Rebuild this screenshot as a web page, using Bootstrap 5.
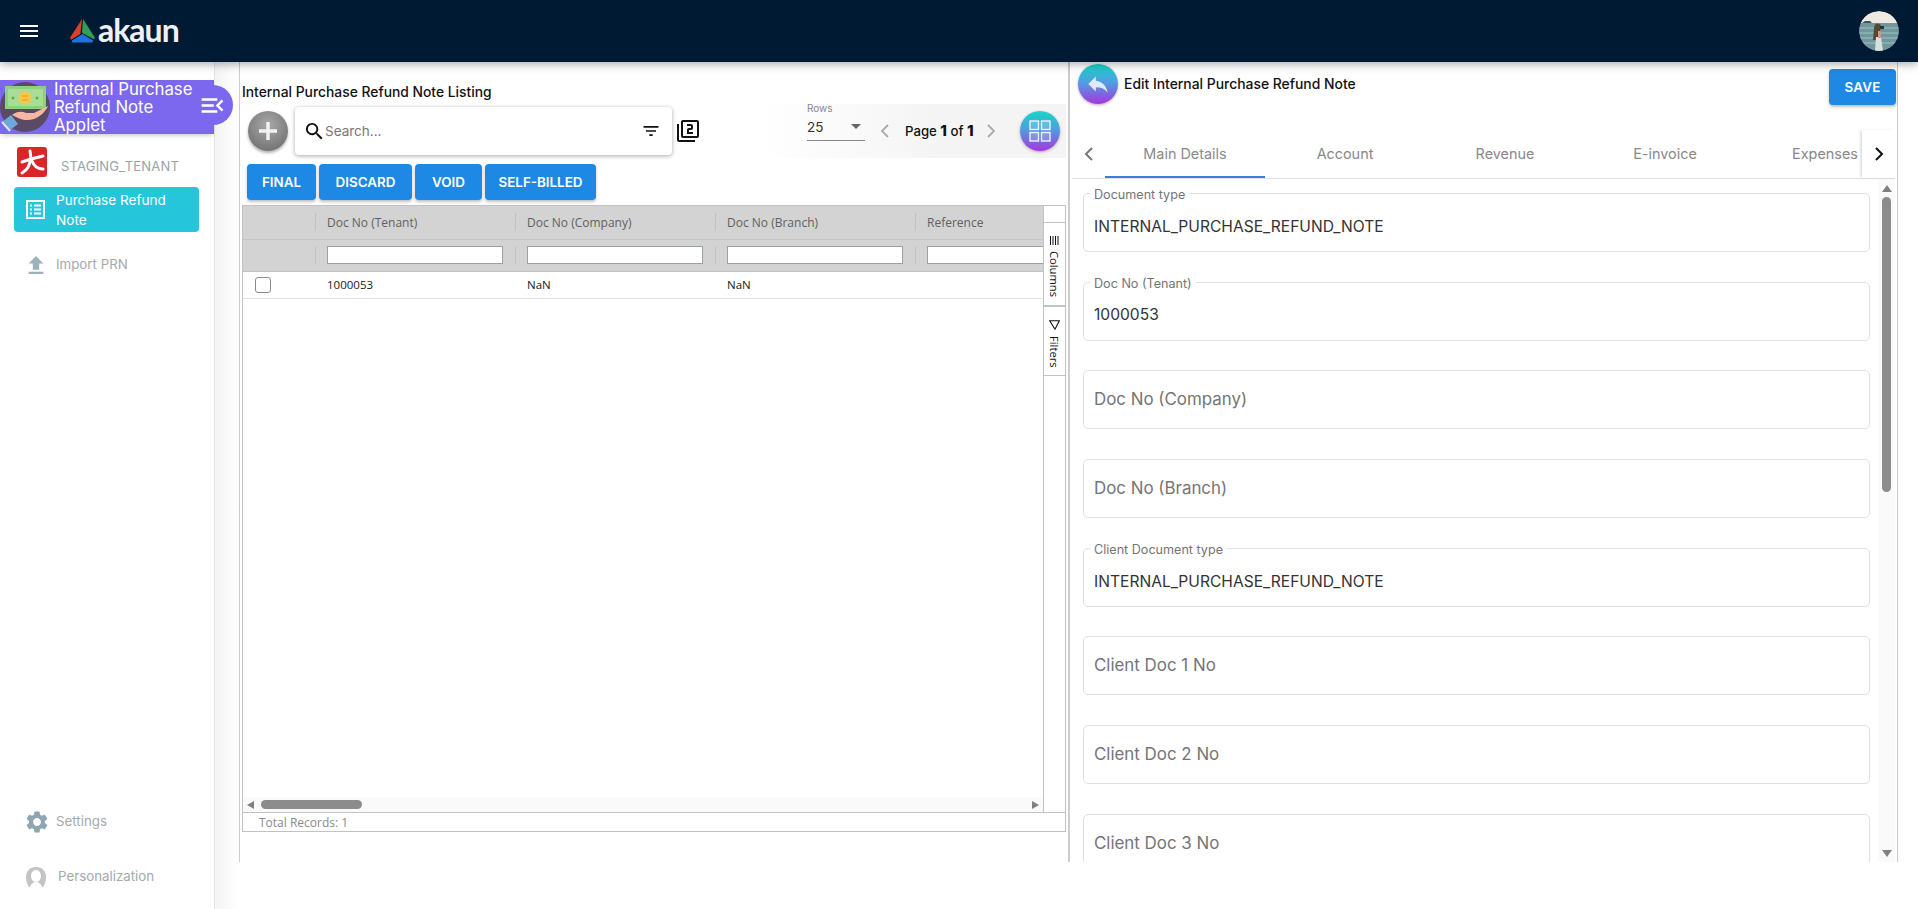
<!DOCTYPE html>
<html lang="en">
<head>
<meta charset="UTF-8">
<title>Internal Purchase Refund Note Applet</title>
<link href="https://cdn.jsdelivr.net/npm/bootstrap@5.3.0/dist/css/bootstrap.min.css" rel="stylesheet">
<style>
  body { height: 909px; overflow: hidden; background: #fff; font-family: "Inter", "Liberation Sans", sans-serif; color: #212529; }

  /* top bar */
  .top-bar { height: 62px; background: #001a33; box-shadow: 0 2px 9px rgba(0,0,0,.35); z-index: 5; padding: 0 19px 0 17px; }
  .logo-word { font-family: "Lato", sans-serif; font-weight: 700; font-size: 32px; letter-spacing: -1px; color: #eef1f4; line-height: 1; margin-left: 2px; margin-top: -3px; }
  .avatar-pic { width: 40px; height: 40px; border-radius: 50%; display: block; }

  /* sidebar */
  .app-body { height: 847px; }
  .side-nav { width: 215px; border-right: 1px solid #e4e4e4; padding-top: 18px; flex: none; }
  .side-shade { width: 24px; flex: none; background: linear-gradient(90deg, #f4f4f4, #fff); }
  .applet-banner { position: relative; height: 54px; background: #7b68ee; color: #fff; font-size: 16.8px; line-height: 18px; padding-left: 54px; padding-right: 14px; box-shadow: 0 3px 5px -2px rgba(0,0,0,.25); width: 214px; margin-right: -1px; }
  .banner-pic { position: absolute; left: 0; top: 2px; }
  .banner-tab { position: absolute; left: 196px; top: 5px; width: 37px; height: 40px; border-radius: 0 20px 20px 0; background: #7b68ee; display: flex; align-items: center; padding-left: 2px; z-index: 2; }
  .tenant-row { padding: 13px 0 0 17px; height: 53px; color: #9aa3a8; font-size: 13px; letter-spacing: .2px; }
  .tenant-row span { margin: 10px 0 0 14px; }
  .active-item { margin: 0 15px 0 14px; height: 45px; background: #26c6da; border-radius: 4px; color: #fff; font-size: 13.6px; line-height: 20px; padding-left: 12px; }
  .active-item svg { margin-right: 11px; flex: none; }
  .active-item span { width: 125px; }
  .side-link { color: #a4a9ad; font-size: 13.3px; }
  .import-link { margin: 22px 0 0 27px; height: 22px; }
  .settings-link { margin: auto 0 33px 26px; height: 22px; }
  .person-link { margin: 0 0 21px 26px; height: 22px; }

  /* listing pane */
  .list-pane { width: 829px; height: 800px; flex: none; border-left: 1px solid #ccc; padding: 20px 2px 0 2px; }
  .list-title { font-size: 13.85px; line-height: 20px; color: #111; font-weight: 500; }
  .tool-row { height: 54px; margin-top: 2px; padding-left: 6px; }
  .plus-btn { width: 40px; height: 40px; border-radius: 50%; flex: none; background: radial-gradient(circle at 50% 35%, #a8a8a8, #6a6a6a 95%); box-shadow: 0 2px 3px rgba(0,0,0,.3); }
  .search-box { width: 377px; height: 48px; margin-left: 7px; border-radius: 4px; background: #fff; box-shadow: 0 1px 4px rgba(0,0,0,.35); padding: 0 11px 0 10px; }
  .search-box input { border: 0; outline: 0; flex: 1; font-size: 13.5px; min-width: 0; padding: 0 0 0 2px; background: transparent; color: #333; }
  .search-box input::placeholder { color: #777; opacity: 1; }
  .pager-box { width: 306px; height: 54px; margin-left: auto; background: linear-gradient(90deg, #fff, #f4f4f4 60%); padding-left: 47px; }
  .rows-pick { width: 58px; height: 39px; border-bottom: 1px solid #8a8a8a; align-self: flex-start; margin-top: -2px; }
  .rows-pick small { display: block; font-size: 10px; line-height: 12px; color: #888; }
  .rows-pick .rows-val { font-size: 13.5px; line-height: 20px; color: #333; padding-top: 3px; }
  .caret-down { width: 0; height: 0; border: 5px solid transparent; border-top: 5px solid #666; border-bottom: 0; margin-left: auto; margin-top: -2px; margin-right: 4px; }
  .page-text { font-size: 13.2px; color: #111; margin: 1px 11px 0 14px; white-space: nowrap; font-weight: 500; }
  .page-text b { font-weight: 800; font-size: 15px; }
  .grad-btn { width: 40px; height: 40px; border-radius: 50%; flex: none; background: linear-gradient(180deg, #15d6c6, #4f9fe0 45%, #a735e0); box-shadow: 0 1px 3px rgba(0,0,0,.3); }
  .grid-btn { margin-left: auto; margin-right: 6px; }
  .action-row { margin-top: 6px; padding-left: 5px; gap: 3px; }
  .btn.act-btn { background: #1e88e5; color: #fff; height: 36px; font-size: 13.4px; font-weight: 600; line-height: 36px; padding: 0; border: 0; border-radius: 4px; box-shadow: 0 2px 3px rgba(0,0,0,.25); }

  /* grid */
  .doc-wrap { height: 627px; margin-top: 5px; border: 1px solid #bdc3c7; font-family: "Open Sans", "Liberation Sans", sans-serif; font-size: 11.5px; }
  .doc-scroll { flex: 1; min-width: 0; overflow: hidden; }
  .doc-grid.table { width: 872px; table-layout: fixed; margin: 0; }
  .doc-grid.table>*>tr>* { padding: 0 0 0 12px; border: 0; vertical-align: middle; box-shadow: none; }
  .doc-grid.table>thead>tr>* { background: #d3d3d3 linear-gradient(#c2c2c2, #c2c2c2) left center / 1px 18px no-repeat; color: #616161; font-weight: 400; font-size: 12px; }
  .doc-grid.table>thead>tr>*:first-child { background-image: none; }
  .doc-grid.table>thead>tr.head-row>* { height: 33px; padding-top: 2px; border-bottom: 1px solid #c3c5c7; }
  .doc-grid.table>thead>tr.filter-row>* { height: 32px; border-bottom: 1px solid #bdc3c7; }
  .doc-grid.table>tbody>tr>* { height: 27px; padding-top: 1px; border-bottom: 1px solid #dde2eb; color: #181818; background: #fff; }
  .doc-grid .first-col { width: 72px; }
  .doc-grid .data-col { width: 200px; }
  .doc-grid input[type=text] { display: block; width: 176px; height: 18px; border: 1px solid #95a5a6; background: #fff; padding: 0; }
  .doc-grid .row-check { display: block; width: 16px; height: 16px; border: 1px solid #8b8b8b; border-radius: 3px; margin-left: 0; background: #fff; }
  .scroll-x { height: 15px; background: #fafafa; padding: 0 4px 0 4px; }
  .scroll-x i { display: block; width: 0; height: 0; border: 4px solid transparent; }
  .arrow-l { border-right: 7px solid #808080 !important; border-left: 0 !important; }
  .arrow-r { border-left: 7px solid #808080 !important; border-right: 0 !important; margin-left: auto; }
  .thumb-x { width: 101px; height: 9px; border-radius: 5px; background: #8c8c8c; margin-left: 7px; }
  .side-rail { width: 22px; flex: none; border-left: 1px solid #bdc3c7; padding-top: 16px; }
  .rail-tab { width: 21px; border-top: 1px solid #bdc3c7; color: #111; font-size: 11.2px; }
  .rail-tab span { writing-mode: vertical-rl; display: block; line-height: 21px; }
  .rail-cols { height: 83px; padding-top: 13px; }
  .rail-cols span { margin-top: 6px; }
  .rail-filt { height: 71px; border-top-width: 2px; border-bottom: 1px solid #bdc3c7; padding-top: 13px; }
  .rail-filt span { margin-top: 6px; }
  .doc-foot { height: 19px; border-top: 1px solid #bdc3c7; color: #8a8a8a; padding-left: 16px; line-height: 19px; flex: none; font-size: 12px; }

  /* edit pane */
  .pane-split { width: 4px; flex: none; border-left: 2px solid #ccc; height: 800px; margin-left: 0; }
  .edit-pane { width: 826px; height: 800px; flex: none; border-right: 1px solid #ccc; }
  .edit-head { height: 68px; padding: 2px 1px 0 6px; }
  .edit-title { font-size: 13.9px; color: #111; margin: 10px 0 0 6px; font-weight: 500; }
  .btn.save-btn { width: 67px; margin: 5px 0 0 auto; letter-spacing: .2px; }
  .tab-strip { height: 49px; border-bottom: 1px solid #e0e0e0; margin-right: 2px; }
  .tab-arrow { width: 33px; flex: none; }
  .tab-hold { flex: 1; overflow: hidden; min-width: 0; }
  .tab-one { width: 160px; flex: none; text-align: center; color: #888; font-size: 14.4px; line-height: 48px; height: 48px; }
  .tab-one.on { color: #8a8a8a; border-bottom: 2px solid #3b7de0; }
  .tab-next { width: 33px; flex: none; box-shadow: -2px 0 3px -1px rgba(0,0,0,.2); }
  .edit-body { height: 683px; }
  .field-col { flex: 1; min-width: 0; overflow: hidden; padding: 14px 8px 0 11px; }
  .doc-field { position: relative; height: 59px; margin-bottom: 29.7px; border: 1px solid #e0e0e0; border-radius: 5px; padding: 8px 10px 0; font-size: 15.6px; color: #333; }
  .doc-field.no-val { padding-top: 0; color: #757575; font-size: 16.9px; }
  .doc-field label { position: absolute; left: 6px; top: -7px; padding: 0 4px; background: #fff; font-size: 12.6px; line-height: 16px; color: #757575; }
  .scroll-y { width: 17px; flex: none; background: #fafafa; margin-right: 2px; padding: 6px 0 5px; }
  .scroll-y i { display: block; width: 0; height: 0; border: 5px solid transparent; }
  .arrow-u { border-bottom: 7px solid #808080 !important; border-top: 0 !important; }
  .arrow-d { border-top: 7px solid #808080 !important; border-bottom: 0 !important; margin-top: auto; }
  .thumb-y { width: 9px; height: 295px; border-radius: 5px; background: #8c8c8c; margin-top: 5px; }
</style>
</head>
<body class="d-flex flex-column">

<!-- top bar -->
<nav class="navbar top-bar flex-nowrap justify-content-start">
  <svg width="24" height="24" viewBox="0 0 24 24" fill="#fff" style="margin-right:28px"><path d="M3 18h18v-2H3v2zm0-5h18v-2H3v2zm0-7v2h18V6H3z"/></svg>
  <svg width="27" height="24" viewBox="0 0 26 23">
    <path d="M12.5 0 1 18l1 2 9-5.5z" fill="#d8412c"/>
    <path d="M13.5 0 25 18l-1 1.5-10.5-5.5-1-1z" fill="#2f9e57"/>
    <path d="M13 14.5 2.5 21l1 1.5h19l1-1.5z" fill="#1f74e0"/>
  </svg>
  <span class="logo-word">akaun</span>
  <svg class="avatar-pic ms-auto" viewBox="0 0 40 40">
    <defs><clipPath id="avaClip"><circle cx="20" cy="20" r="20"/></clipPath></defs>
    <g clip-path="url(#avaClip)">
      <rect width="40" height="12" fill="#efe9e2"/><rect y="12" width="40" height="28" fill="#6f979c"/>
      <path d="M0 17h40M0 22h40M0 27h40M0 32h40" stroke="#a3c0c2" stroke-width="1"/>
      <path d="M3 12l3-2h5l2 2z" fill="#3f5458"/>
      <path d="M15 18c0-6 5-7 7-3l-1 6-2 8h-5z" fill="#5b4632"/><path d="M17 26h5l2 14h-8z" fill="#d7dfe2"/>
      <path d="M19 20h3v7h-3z" fill="#c99b82"/><rect x="21" y="15" width="4" height="3" fill="#2c3438"/>
    </g>
  </svg>
</nav>

<div class="d-flex app-body">
  <!-- sidebar -->
  <aside class="side-nav d-flex flex-column">
    <div class="applet-banner">
      <svg class="banner-pic" width="50" height="50" viewBox="0 0 50 50">
        <circle cx="25" cy="25" r="25" fill="#5b4a63"/>
        <rect x="5" y="4" width="41" height="23" fill="#8ed081"/><rect x="8" y="7" width="35" height="17" fill="#a9dd97"/>
        <circle cx="25" cy="16" r="6.5" fill="#f6c945"/><path d="M22 14h6M28 18h-6" stroke="#e2972c" stroke-width="1.2"/>
        <circle cx="13" cy="16" r="1.5" fill="#5cae52"/><circle cx="37" cy="16" r="1.5" fill="#5cae52"/>
        <path d="M12 33c5-4 10-4 14-2l8 0 14-7c-2 5-8 11-14 13-6 2-12 1-16-1z" fill="#f6b7a2"/>
        <path d="M2 40l9-7 7 9-8 6z" fill="#6ea7dc"/><path d="M2 40l8 9" stroke="#dbe9f6" stroke-width="2"/>
      </svg>
      Internal Purchase Refund Note Applet
      <div class="banner-tab">
        <svg width="29" height="29" viewBox="0 0 24 24" fill="#fff"><path d="M3 18h13v-2H3v2zm0-5h10v-2H3v2zm0-7v2h13V6H3zm18 9.59L17.42 12 21 8.41 19.59 7l-5 5 5 5L21 15.59z"/></svg>
      </div>
    </div>
    <div class="tenant-row d-flex align-items-start">
      <svg width="30" height="30" viewBox="0 0 30 30"><rect width="30" height="30" rx="3" fill="#d92727"/><path d="M13 4l1 8-9 3M14 12l12-3M13 13c0 6-3 10-8 13M15 14c2 5 5 8 11 8" stroke="#fff" stroke-width="3" fill="none" stroke-linecap="round"/></svg>
      <span>STAGING_TENANT</span>
    </div>
    <div class="active-item d-flex align-items-center">
      <svg width="19" height="19" viewBox="0 0 19 19" fill="none" stroke="#fff"><rect x="1" y="1" width="17" height="17" stroke-width="2"/><path d="M4 5.5h2M8 5.5h7M4 9.5h2M8 9.5h7M4 13.5h2M8 13.5h7" stroke-width="1.8"/></svg>
      <span>Purchase Refund Note</span>
    </div>
    <div class="side-link import-link d-flex align-items-center">
      <svg width="18" height="20" viewBox="4 2 16 19" fill="#9db1bb" style="margin-right:11px"><path d="M9 16h6v-6h4l-7-7-7 7h4zm-4 2h14v2H5z"/></svg>
      <span>Import PRN</span>
    </div>
    <div class="side-link settings-link d-flex align-items-center">
      <svg width="22" height="22" viewBox="2 2 20 20" fill="#8fa6b2" style="margin-right:8px"><path d="M19.14 12.94c.04-.3.06-.61.06-.94 0-.32-.02-.64-.07-.94l2.03-1.58c.18-.14.23-.41.12-.61l-1.92-3.32c-.12-.22-.37-.29-.59-.22l-2.39.96c-.5-.38-1.03-.7-1.62-.94l-.36-2.54c-.04-.24-.24-.41-.48-.41h-3.84c-.24 0-.43.17-.47.41l-.36 2.54c-.59.24-1.13.57-1.62.94l-2.39-.96c-.22-.08-.47 0-.59.22L2.74 8.87c-.12.21-.08.47.12.61l2.03 1.58c-.05.3-.09.63-.09.94s.02.64.07.94l-2.03 1.58c-.18.14-.23.41-.12.61l1.92 3.32c.12.22.37.29.59.22l2.39-.96c.5.38 1.03.7 1.62.94l.36 2.54c.05.24.24.41.48.41h3.84c.24 0 .44-.17.47-.41l.36-2.54c.59-.24 1.13-.56 1.62-.94l2.39.96c.22.08.47 0 .59-.22l1.92-3.32c.12-.22.07-.47-.12-.61l-2.01-1.58zM12 15.6c-1.98 0-3.6-1.62-3.6-3.6s1.62-3.6 3.6-3.6 3.6 1.62 3.6 3.6-1.62 3.6-3.6 3.6z"/></svg>
      <span>Settings</span>
    </div>
    <div class="side-link person-link d-flex align-items-center">
      <svg width="20" height="20" viewBox="0 0 20 20" style="margin-right:12px"><path d="M10 0c6 0 10 4 10 10 0 4-1 7-3 10H3C1 17 0 14 0 10 0 4 4 0 10 0z" fill="#c4c4c4"/><path d="M10 3c3 0 5 3 5 6s-2 6-5 6-5-3-5-6 2-6 5-6zM4 20c1-3 3-5 6-5s5 2 6 5z" fill="#fff"/></svg>
      <span>Personalization</span>
    </div>
  </aside>
  <div class="side-shade"></div>

  <!-- listing -->
  <main class="list-pane d-flex flex-column">
    <div class="list-title">Internal Purchase Refund Note Listing</div>
    <div class="tool-row d-flex align-items-center">
      <div class="plus-btn d-flex align-items-center justify-content-center">
        <svg width="24" height="24" viewBox="0 0 24 24"><path d="M12 3v18M3 12h18" stroke="#f2f2f2" stroke-width="3.4"/></svg>
      </div>
      <div class="search-box d-flex align-items-center">
        <svg width="18" height="18" viewBox="2 2 19 19" fill="#111"><path d="M15.5 14h-.79l-.28-.27C15.41 12.59 16 11.11 16 9.5 16 5.91 13.09 3 9.5 3S3 5.91 3 9.5 5.91 16 9.5 16c1.61 0 3.09-.59 4.23-1.57l.27.28v.79l5 4.99L20.49 19l-4.99-5zm-6 0C7.01 14 5 11.99 5 9.5S7.01 5 9.5 5 14 7.01 14 9.5 11.99 14 9.5 14z"/></svg>
        <input type="text" placeholder="Search...">
        <svg width="20" height="20" viewBox="0 0 24 24" fill="#111"><path d="M10 18h4v-2h-4v2zM3 6v2h18V6H3zm3 7h12v-2H6v2z"/></svg>
      </div>
      <svg width="24" height="24" viewBox="0 0 24 24" fill="#111" style="margin-left:4px"><path d="M3 5H1v16c0 1.1.9 2 2 2h16v-2H3V5zm18-4H7c-1.1 0-2 .9-2 2v14c0 1.1.9 2 2 2h14c1.1 0 2-.9 2-2V3c0-1.1-.9-2-2-2zm0 16H7V3h14v14zm-4-4h-4v-2h2c1.1 0 2-.89 2-2V7c0-1.11-.9-2-2-2h-4v2h4v2h-2c-1.1 0-2 .89-2 2v4h6v-2z"/></svg>
      <div class="pager-box d-flex align-items-center">
        <div class="rows-pick">
          <small>Rows</small>
          <div class="rows-val d-flex align-items-center">25<span class="caret-down"></span></div>
        </div>
        <svg width="12" height="14" viewBox="0 0 12 14" fill="none" stroke="#aaa" stroke-width="1.8" style="margin-left:14px"><path d="M9 1 3 7l6 6"/></svg>
        <span class="page-text">Page <b>1</b> of <b>1</b></span>
        <svg width="12" height="14" viewBox="0 0 12 14" fill="none" stroke="#aaa" stroke-width="1.8"><path d="m3 1 6 6-6 6"/></svg>
        <div class="grad-btn grid-btn d-flex align-items-center justify-content-center">
          <svg width="22" height="22" viewBox="0 0 22 22" fill="#fff" fill-opacity=".18" stroke="#e8f4fb" stroke-width="1.4"><rect x="1" y="1" width="8.5" height="8.5"/><rect x="12.5" y="1" width="8.5" height="8.5"/><rect x="1" y="12.5" width="8.5" height="8.5"/><rect x="12.5" y="12.5" width="8.5" height="8.5"/></svg>
        </div>
      </div>
    </div>
    <div class="action-row d-flex">
      <button type="button" class="btn act-btn" style="width:69px">FINAL</button>
      <button type="button" class="btn act-btn" style="width:93px">DISCARD</button>
      <button type="button" class="btn act-btn" style="width:67px">VOID</button>
      <button type="button" class="btn act-btn" style="width:111px">SELF-BILLED</button>
    </div>

    <div class="doc-wrap d-flex flex-column">
      <div class="d-flex flex-fill" style="min-height:0">
        <div class="doc-scroll d-flex flex-column">
          <div class="flex-fill" style="overflow:hidden;min-height:0">
            <table class="table doc-grid">
              <colgroup><col class="first-col"><col class="data-col"><col class="data-col"><col class="data-col"><col class="data-col"></colgroup>
              <thead>
                <tr class="head-row"><th></th><th>Doc No (Tenant)</th><th>Doc No (Company)</th><th>Doc No (Branch)</th><th>Reference</th></tr>
                <tr class="filter-row"><th></th><th><input type="text"></th><th><input type="text"></th><th><input type="text"></th><th><input type="text"></th></tr>
              </thead>
              <tbody>
                <tr><td><span class="row-check"></span></td><td>1000053</td><td>NaN</td><td>NaN</td><td></td></tr>
              </tbody>
            </table>
          </div>
          <div class="scroll-x d-flex align-items-center flex-none">
            <i class="arrow-l"></i><span class="thumb-x"></span><i class="arrow-r"></i>
          </div>
        </div>
        <div class="side-rail">
          <div class="rail-tab rail-cols d-flex flex-column align-items-center">
            <svg width="11" height="9" viewBox="0 0 11 9" stroke="#111" stroke-width="1"><path d="M1.5 0v9M4 0v9M6.5 0v9M9 0v9"/></svg>
            <span>Columns</span>
          </div>
          <div class="rail-tab rail-filt d-flex flex-column align-items-center">
            <svg width="11" height="10" viewBox="0 0 11 10" fill="none" stroke="#111" stroke-width="1.1"><path d="M.7.8h9.6L6 9.2z"/></svg>
            <span>Filters</span>
          </div>
        </div>
      </div>
      <div class="doc-foot">Total Records: 1</div>
    </div>
  </main>

  <div class="pane-split"></div>

  <!-- edit form -->
  <section class="edit-pane d-flex flex-column">
    <div class="edit-head d-flex align-items-start">
      <div class="grad-btn d-flex align-items-center justify-content-center">
        <svg width="26" height="26" viewBox="0 0 24 24" fill="#dfe9fb"><path d="M10 9V5l-7 7 7 7v-4.1c5 0 8.5 1.6 11 5.1-1-5-4-10-11-11z"/></svg>
      </div>
      <div class="edit-title">Edit Internal Purchase Refund Note</div>
      <button type="button" class="btn act-btn save-btn">SAVE</button>
    </div>
    <div class="tab-strip d-flex">
      <div class="tab-arrow d-flex align-items-center justify-content-center">
        <svg width="12" height="14" viewBox="0 0 12 14" fill="none" stroke="#777" stroke-width="2"><path d="M9 1 3 7l6 6"/></svg>
      </div>
      <div class="tab-hold d-flex">
        <div class="tab-one on">Main Details</div>
        <div class="tab-one">Account</div>
        <div class="tab-one">Revenue</div>
        <div class="tab-one">E-invoice</div>
        <div class="tab-one">Expenses</div>
      </div>
      <div class="tab-next d-flex align-items-center justify-content-center">
        <svg width="12" height="14" viewBox="0 0 12 14" fill="none" stroke="#111" stroke-width="2"><path d="m3 1 6 6-6 6"/></svg>
      </div>
    </div>
    <div class="edit-body d-flex">
      <div class="field-col">
        <div class="doc-field d-flex align-items-center"><label>Document type</label>INTERNAL_PURCHASE_REFUND_NOTE</div>
        <div class="doc-field d-flex align-items-center"><label>Doc No (Tenant)</label>1000053</div>
        <div class="doc-field no-val d-flex align-items-center">Doc No (Company)</div>
        <div class="doc-field no-val d-flex align-items-center">Doc No (Branch)</div>
        <div class="doc-field d-flex align-items-center"><label>Client Document type</label>INTERNAL_PURCHASE_REFUND_NOTE</div>
        <div class="doc-field no-val d-flex align-items-center">Client Doc 1 No</div>
        <div class="doc-field no-val d-flex align-items-center">Client Doc 2 No</div>
        <div class="doc-field no-val d-flex align-items-center">Client Doc 3 No</div>
      </div>
      <div class="scroll-y d-flex flex-column align-items-center">
        <i class="arrow-u"></i><span class="thumb-y"></span><i class="arrow-d"></i>
      </div>
    </div>
  </section>
</div>

<script src="https://cdn.jsdelivr.net/npm/bootstrap@5.3.0/dist/js/bootstrap.bundle.min.js"></script>
</body>
</html>
